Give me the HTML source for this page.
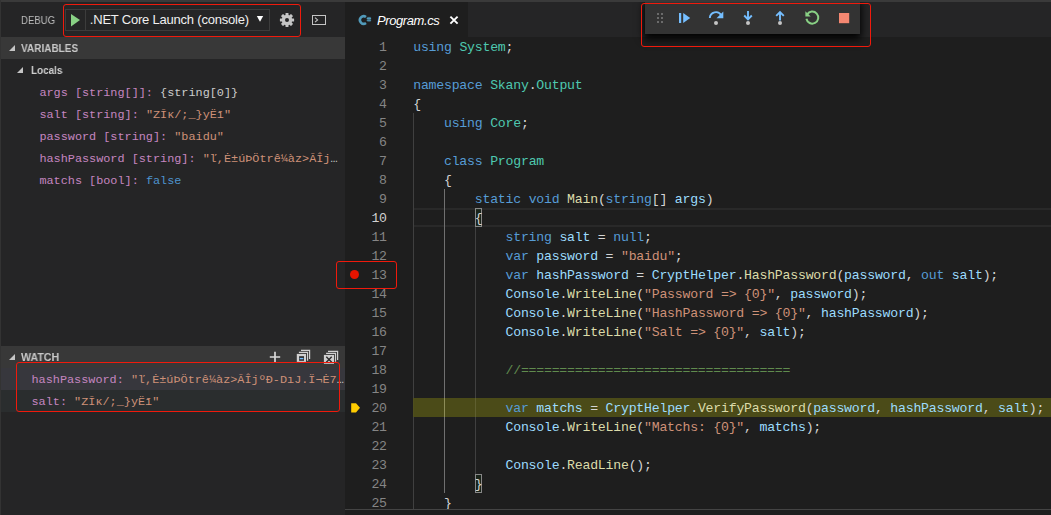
<!DOCTYPE html>
<html lang="en">
<head>
<meta charset="utf-8">
<title>Debug - Program.cs</title>
<style>
html,body{margin:0;padding:0;background:#1e1e1e;}
body{width:1051px;height:515px;position:relative;overflow:hidden;font-family:"Liberation Sans",sans-serif;color:#ccc;}
.abs{position:absolute;}
#side{left:0;top:0;width:345px;height:515px;background:#252526;}
#edge{left:0;top:0;width:1px;height:515px;background:#333;}
#tabs{left:345px;top:0;width:706px;height:37px;background:#252526;}
#tab{left:345px;top:0;width:123px;height:37px;background:#1e1e1e;}
#topstrip{left:0;top:0;width:1051px;height:2px;background:#3a3a3a;}
.hdr{left:1px;width:344px;height:22px;background:#383838;}
.hdr span{position:absolute;left:20.3px;transform-origin:0 50%;will-change:transform;top:0;line-height:22px;font-size:11px;font-weight:bold;color:#c8c8c8;white-space:nowrap;}
.tw{position:absolute;width:0;height:0;border-style:solid;border-width:0 0 6px 6px;border-color:transparent transparent #c5c5c5 transparent;}
.row{left:1px;width:344px;height:22px;line-height:24px;white-space:nowrap;overflow:hidden;font-family:"Liberation Mono",monospace;font-size:11.84px;}
.row span{white-space:pre;}
.nm{color:#c586c0;}
.st{color:#ce9178;}
.bo{color:#4e94ce;}
.ob{color:#cccccc;}
.el{color:#c8c8c8;}
.red{border:1.3px solid #f01a0c;border-radius:3px;box-sizing:border-box;}
.ln{position:absolute;margin-top:1px;left:345px;width:41.8px;height:19px;line-height:19px;text-align:right;color:#858585;font-family:"Liberation Mono",monospace;font-size:13.2px;letter-spacing:-0.22px;}
.ln.cur{color:#d0d0d0;}
.cl{position:absolute;margin-top:1px;left:413.2px;height:19px;line-height:19px;white-space:pre;color:#d4d4d4;font-family:"Liberation Mono",monospace;font-size:13.2px;letter-spacing:-0.22px;}
.k{color:#569cd6;}.t{color:#4ec9b0;}.v{color:#9cdcfe;}.m{color:#dcdcaa;}.s{color:#ce9178;}.c{color:#608b4e;}
.guide{width:1px;background:#404040;}
.bm{box-sizing:border-box;border:1px solid #888;background:rgba(0,100,0,0.1);width:7px;height:19px;}
</style>
</head>
<body>
<div id="side" class="abs"></div>
<div id="tabs" class="abs"></div>
<div id="tab" class="abs"></div>

<!-- ===== sidebar title ===== -->
<div class="abs" id="t_debug" style="left:21.3px;top:9px;transform-origin:0 50%;transform:scaleX(0.875);will-change:transform;line-height:22px;font-size:11px;color:#bbbbbb;white-space:nowrap;">DEBUG</div>
<div class="abs" style="left:65px;top:9px;width:205px;height:22px;box-sizing:border-box;border:1px solid #3c3c3c;background:#252526;"></div>
<div class="abs" style="left:85px;top:9px;width:1px;height:22px;background:#3c3c3c;"></div>
<svg class="abs" style="left:65px;top:9px" width="22" height="22" viewBox="0 0 22 22"><path d="M6 5 L15 11 L6 17.4 Z" fill="#89d185"/></svg>
<div class="abs" id="t_cfg" style="left:89.8px;top:9px;letter-spacing:-0.21px;line-height:22px;font-size:13px;color:#f0f0f0;white-space:nowrap;">.NET Core Launch (console)</div>
<svg class="abs" style="left:255px;top:14px" width="10" height="10" viewBox="0 0 10 10"><path d="M1.8 1.9 L8.2 1.9 L5 7.7 Z" fill="#ffffff"/></svg>
<!-- gear -->
<svg class="abs" style="left:279px;top:12px" width="16" height="16" viewBox="-8 -8 16 16">
<g fill="#c5c5c5">
<circle r="5.2"/>
<g id="teeth"><rect x="-1.5" y="-7.1" width="3" height="14.2" rx="0.5"/><rect x="-7.1" y="-1.5" width="14.2" height="3" rx="0.5"/></g>
<g transform="rotate(45)"><rect x="-1.5" y="-7.1" width="3" height="14.2" rx="0.5"/><rect x="-7.1" y="-1.5" width="14.2" height="3" rx="0.5"/></g>
</g>
<circle r="2" fill="#252526"/>
</svg>
<!-- terminal -->
<svg class="abs" style="left:311px;top:14px" width="16" height="12" viewBox="0 0 16 12">
<rect x="1.5" y="1.5" width="13" height="9" fill="none" stroke="#c5c5c5" stroke-width="1"/>
<path d="M4 3.6 L6.6 5.9 L4 8.2" fill="none" stroke="#c5c5c5" stroke-width="1.1"/>
</svg>

<!-- ===== VARIABLES ===== -->
<div class="abs hdr" style="top:37px"><div class="tw" style="left:7.5px;top:7.5px"></div><span id="t_vars" style="transform:scaleX(0.91)">VARIABLES</span></div>
<div class="abs" style="left:1px;top:59px;width:344px;height:22px;">
<div class="tw" style="left:16.3px;top:7.5px"></div>
<span class="abs" id="t_locals" style="left:30.1px;transform-origin:0 50%;transform:scaleX(0.90);will-change:transform;top:0;line-height:22px;font-size:11px;font-weight:bold;color:#d0d0d0;">Locals</span></div>
<div class="abs row" style="top:81px;padding-left:38.4px;"><span id="r1"><span class="nm">args [string[]]: </span><span class="ob">{string[0]}</span></span></div>
<div class="abs row" style="top:103px;padding-left:38.4px;"><span id="r2"><span class="nm">salt [string]: </span><span class="st">"ZĪĸ/;_}yËī"</span></span></div>
<div class="abs row" style="top:125px;padding-left:38.4px;"><span id="r3"><span class="nm">password [string]: </span><span class="st">"baidu"</span></span></div>
<div class="abs row" style="top:147px;padding-left:38.4px;"><span id="r4"><span class="nm">hashPassword [string]: </span><span class="st">"ľ,Ė±úÞÖtrê¼àz&gt;ĀÎj</span><span class="el">…</span></span></div>
<div class="abs row" style="top:169px;padding-left:38.4px;"><span id="r5"><span class="nm">matchs [bool]: </span><span class="bo">false</span></span></div>

<!-- ===== WATCH ===== -->
<div class="abs hdr" style="top:346px"><div class="tw" style="left:7.5px;top:7.5px"></div><span id="t_watch" style="transform:scaleX(0.967)">WATCH</span></div>
<!-- header actions -->
<svg class="abs" style="left:268px;top:350px" width="14" height="14" viewBox="0 0 14 14"><path d="M7 1.8 V12.2 M1.8 7 H12.2" stroke="#d8d8d8" stroke-width="1.7" fill="none"/></svg>
<svg class="abs" style="left:296px;top:349px" width="16" height="15" viewBox="0 0 16 15">
<path d="M5 1.35 H13.6 V9.9 M2.9 3.45 H11.55 V11.7" fill="none" stroke="#d0d0d0" stroke-width="1.2"/>
<rect x="0.8" y="4.9" width="9.2" height="8" fill="#d0d0d0"/>
<rect x="3.1" y="7.2" width="4.9" height="4.6" fill="#2b2b2b"/>
<rect x="3.7" y="8.9" width="3.7" height="1.4" fill="#75beff"/>
</svg>
<svg class="abs" style="left:323px;top:350px" width="16" height="15" viewBox="0 0 16 15">
<path d="M5 1.45 H14.6 V9.9 M3.1 3.45 H12.5 V11.8" fill="none" stroke="#d0d0d0" stroke-width="1.2"/>
<rect x="0.9" y="4.9" width="10.1" height="8.9" fill="#cfcfcf"/>
<path d="M3.3 6.8 L8.7 12.2 M8.7 6.8 L3.3 12.2" stroke="#2b2b2b" stroke-width="1.4" fill="none"/>
</svg>
<div class="abs row" style="top:368px;background:#37373d;padding-left:30.5px;box-sizing:border-box;"><span id="w1"><span class="nm">hashPassword: </span><span class="st">"ľ,Ė±úÞÖtrê¼àz&gt;ĀÎjºÐ-DıJ.Ï¬Ė7</span><span class="el">…</span></span></div>
<div class="abs row" style="top:390px;background:#2a2d2e;padding-left:30.5px;box-sizing:border-box;"><span id="w2"><span class="nm">salt: </span><span class="st">"ZĪĸ/;_}yËī"</span></span></div>

<!-- ===== editor tab ===== -->
<svg class="abs" style="left:358px;top:14px" width="14" height="12" viewBox="0 0 14 12">
<path d="M8.0 3.0 A3.75 3.75 0 1 0 8.0 9.0" fill="none" stroke="#519aba" stroke-width="2.6"/>
<path d="M10.1 2.9 V7.7 M11.9 2.9 V7.7" stroke="#519aba" stroke-width="1" fill="none"/>
<path d="M8.7 4.4 H13.1 M8.7 6.3 H13.1" stroke="#519aba" stroke-width="1.1" fill="none"/>
</svg>
<div class="abs" id="t_tab" style="left:377px;top:10px;letter-spacing:-0.41px;line-height:22px;font-size:13px;font-style:italic;color:#ffffff;white-space:nowrap;">Program.cs</div>
<svg class="abs" style="left:449px;top:15px" width="10" height="10" viewBox="0 0 10 10"><path d="M1.4 1.6 L8.6 8.6 M8.6 1.6 L1.4 8.6" stroke="#ffffff" stroke-width="1.9" fill="none"/></svg>

<!-- ===== editor decorations ===== -->
<div class="abs" style="left:413px;top:398px;width:638px;height:19px;background:#4b4b18;"></div>
<div class="abs" style="left:414px;top:208px;width:637px;height:19px;box-sizing:border-box;border-top:2px solid #292929;border-bottom:2px solid #292929;"></div>
<div class="abs guide" style="left:413px;top:113px;height:397px;"></div>
<div class="abs guide" style="left:444px;top:189px;height:304px;background:#707070;"></div>
<div class="abs guide" style="left:475px;top:227px;height:247px;"></div>
<div class="abs" style="left:413px;top:398px;width:1px;height:19px;background:#4f4f1e;"></div>
<div class="abs" style="left:444px;top:398px;width:1px;height:19px;background:#8d8d58;"></div>
<div class="abs" style="left:475px;top:398px;width:1px;height:19px;background:#5f5f30;"></div>
<div class="abs bm" style="left:475px;top:208px;"></div>
<div class="abs bm" style="left:475px;top:474px;"></div>
<!-- breakpoint + current frame glyphs -->
<div class="abs" style="left:350px;top:270px;width:9.4px;height:9.4px;border-radius:50%;background:#e51400;"></div>
<svg class="abs" style="left:350px;top:401.6px" width="12" height="12" viewBox="0 0 12 12"><path d="M1.2 1.2 H6 L10 5.8 L6 10.4 H1.2 Z" fill="#ffcc00"/></svg>

<div class="ln" style="top:37px">1</div>
<div class="cl" style="top:37px"><span class="k">using</span> <span class="t">System</span>;</div>
<div class="ln" style="top:56px">2</div>
<div class="ln" style="top:75px">3</div>
<div class="cl" style="top:75px"><span class="k">namespace</span> <span class="t">Skany</span>.<span class="t">Output</span></div>
<div class="ln" style="top:94px">4</div>
<div class="cl" style="top:94px">{</div>
<div class="ln" style="top:113px">5</div>
<div class="cl" style="top:113px">    <span class="k">using</span> <span class="t">Core</span>;</div>
<div class="ln" style="top:132px">6</div>
<div class="ln" style="top:151px">7</div>
<div class="cl" style="top:151px">    <span class="k">class</span> <span class="t">Program</span></div>
<div class="ln" style="top:170px">8</div>
<div class="cl" style="top:170px">    {</div>
<div class="ln" style="top:189px">9</div>
<div class="cl" style="top:189px">        <span class="k">static</span> <span class="k">void</span> <span class="m">Main</span>(<span class="k">string</span>[] <span class="v">args</span>)</div>
<div class="ln cur" style="top:208px">10</div>
<div class="cl" style="top:208px">        {</div>
<div class="ln" style="top:227px">11</div>
<div class="cl" style="top:227px">            <span class="k">string</span> <span class="v">salt</span> = <span class="k">null</span>;</div>
<div class="ln" style="top:246px">12</div>
<div class="cl" style="top:246px">            <span class="k">var</span> <span class="v">password</span> = <span class="s">"baidu"</span>;</div>
<div class="ln" style="top:265px">13</div>
<div class="cl" style="top:265px">            <span class="k">var</span> <span class="v">hashPassword</span> = <span class="v">CryptHelper</span>.<span class="m">HashPassword</span>(<span class="v">password</span>, <span class="k">out</span> <span class="v">salt</span>);</div>
<div class="ln" style="top:284px">14</div>
<div class="cl" style="top:284px">            <span class="v">Console</span>.<span class="m">WriteLine</span>(<span class="s">"Password =&gt; {0}"</span>, <span class="v">password</span>);</div>
<div class="ln" style="top:303px">15</div>
<div class="cl" style="top:303px">            <span class="v">Console</span>.<span class="m">WriteLine</span>(<span class="s">"HashPassword =&gt; {0}"</span>, <span class="v">hashPassword</span>);</div>
<div class="ln" style="top:322px">16</div>
<div class="cl" style="top:322px">            <span class="v">Console</span>.<span class="m">WriteLine</span>(<span class="s">"Salt =&gt; {0}"</span>, <span class="v">salt</span>);</div>
<div class="ln" style="top:341px">17</div>
<div class="ln" style="top:360px">18</div>
<div class="cl" style="top:360px">            <span class="c">//===================================</span></div>
<div class="ln" style="top:379px">19</div>
<div class="ln" style="top:398px">20</div>
<div class="cl" style="top:398px">            <span class="k">var</span> <span class="v">matchs</span> = <span class="v">CryptHelper</span>.<span class="m">VerifyPassword</span>(<span class="v">password</span>, <span class="v">hashPassword</span>, <span class="v">salt</span>);</div>
<div class="ln" style="top:417px">21</div>
<div class="cl" style="top:417px">            <span class="v">Console</span>.<span class="m">WriteLine</span>(<span class="s">"Matchs: {0}"</span>, <span class="v">matchs</span>);</div>
<div class="ln" style="top:436px">22</div>
<div class="ln" style="top:455px">23</div>
<div class="cl" style="top:455px">            <span class="v">Console</span>.<span class="m">ReadLine</span>();</div>
<div class="ln" style="top:474px">24</div>
<div class="cl" style="top:474px">        }</div>
<div class="ln" style="top:493px">25</div>
<div class="cl" style="top:493px">    }</div>

<div class="abs" style="left:345px;top:509px;width:706px;height:1px;background:#444;"></div>

<!-- ===== debug toolbar ===== -->
<div class="abs" id="dbar" style="left:645px;top:0;width:215px;height:34px;background:#333333;box-shadow:0 4px 8px 1px #000;"></div>
<svg class="abs" style="left:645px;top:2px" width="215" height="32" viewBox="0 0 215 32">
<g fill="#6b6b6b"><rect x="12" y="11" width="2" height="2"/><rect x="16" y="11" width="2" height="2"/><rect x="12" y="15" width="2" height="2"/><rect x="16" y="15" width="2" height="2"/><rect x="12" y="19" width="2" height="2"/><rect x="16" y="19" width="2" height="2"/></g>
<!-- continue -->
<g fill="#75beff"><rect x="34" y="11" width="2.2" height="10"/><path d="M38.2 11 L45.2 16 L38.2 21 Z"/></g>
<!-- step over -->
<path d="M64.8 16 A6.2 6.2 0 0 1 76.3 13.2" fill="none" stroke="#75beff" stroke-width="1.9"/>
<path d="M78.3 9.4 V16.2 H71.5 Z" fill="#75beff"/>
<circle cx="71" cy="21" r="2" fill="#c5c5c5"/>
<!-- step into -->
<path d="M103 9.1 V17.2 M99.2 13.5 L103 17.3 L106.8 13.5" fill="none" stroke="#75beff" stroke-width="1.9"/>
<circle cx="103" cy="21" r="2" fill="#c5c5c5"/>
<!-- step out -->
<path d="M135 18.4 V10.2 M131.2 13.8 L135 10 L138.8 13.8" fill="none" stroke="#75beff" stroke-width="1.9"/>
<circle cx="135" cy="21" r="2" fill="#c5c5c5"/>
<!-- restart -->
<path d="M162.2 12.4 A6 6 0 1 1 161.4 16.8" fill="none" stroke="#89d185" stroke-width="2"/>
<path d="M160.4 9.3 V14.6 H165.7 Z" fill="#89d185"/>
<!-- stop -->
<rect x="194" y="11" width="10.2" height="10.2" fill="#f48771"/>
</svg>
<div class="abs" id="topstrip"></div>
<div class="abs" id="edge"></div>

<!-- ===== red annotation boxes ===== -->
<div class="abs red" style="left:62.5px;top:3.5px;width:238.5px;height:33px;"></div>
<div class="abs red" style="left:641px;top:3px;width:230px;height:43.5px;"></div>
<div class="abs red" style="left:336px;top:261px;width:61px;height:27.5px;"></div>
<div class="abs red" style="left:16px;top:362px;width:324px;height:50px;"></div>
</body>
</html>
